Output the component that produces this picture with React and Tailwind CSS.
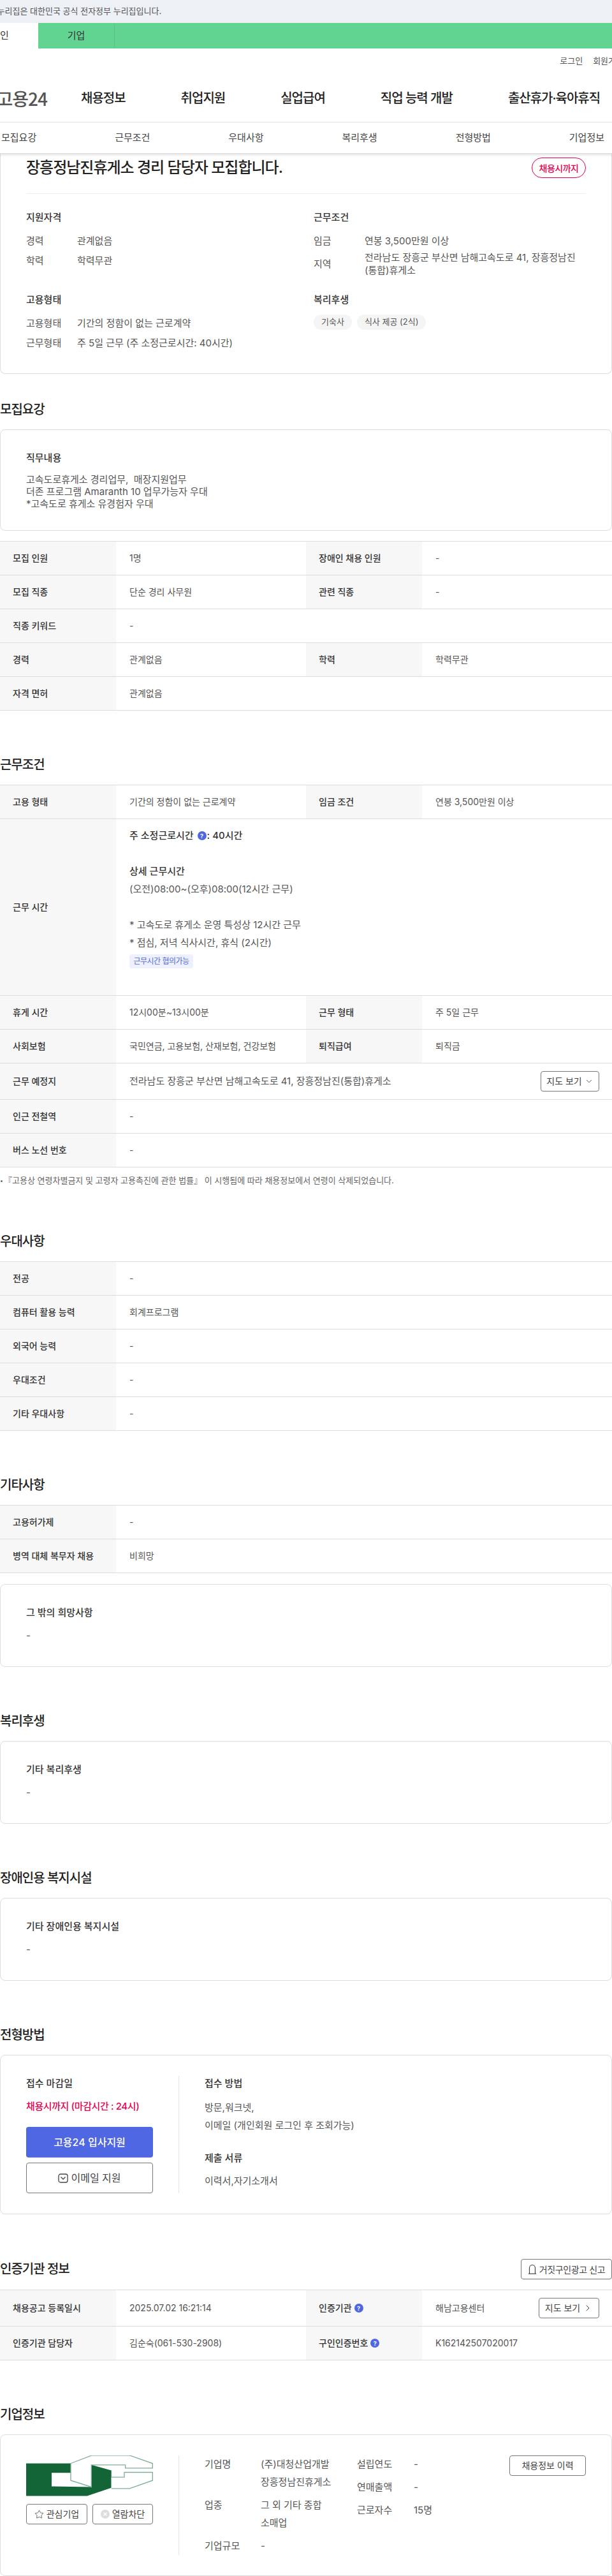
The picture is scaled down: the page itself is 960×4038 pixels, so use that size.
import { ChevronDown, ChevronRight, Star } from "lucide-react";

const TABS = ["모집요강", "근무조건", "우대사항", "복리후생", "전형방법", "기업정보"];
const NAV = ["채용정보", "취업지원", "실업급여", "직업 능력 개발", "출산휴가·육아휴직"];

export default function App() {
    return (
        <div className="relative w-[960px] overflow-hidden bg-white font-['Inter','Noto_Sans_CJK_KR',sans-serif] text-[#222]">
            <Header />

            <div className="rounded-b-lg border-x border-b border-[#ddd] px-10 pt-[6px] pb-[37px]">
                <div className="flex items-start justify-between border-b border-[#eee] pb-6">
                    <h1 className="text-[24px] leading-8 font-medium tracking-[-1px] text-[#222]">
                        장흥정남진휴게소 경리 담당자 모집합니다.
                    </h1>
                    <span className="flex h-8 w-[85px] items-center justify-center rounded-full border border-[#e6004d] text-[14px] font-medium tracking-[-0.5px] text-[#e6004d]">
                        채용시까지
                    </span>
                </div>
                <div className="mt-[25px] grid grid-cols-[451px_1fr] gap-y-6">
                    <div>
                        <SummaryTitle>지원자격</SummaryTitle>
                        <SummaryRow label="경력" value="관계없음" className="mt-[15px]" />
                        <SummaryRow label="학력" value="학력무관" className="mt-[11px]" />
                    </div>
                    <div>
                        <SummaryTitle>근무조건</SummaryTitle>
                        <SummaryRow label="임금" value="연봉 3,500만원 이상" className="mt-[15px]" />
                        <SummaryRow
                            label="지역"
                            value="전라남도 장흥군 부산면 남해고속도로 41, 장흥정남진(통합)휴게소"
                            className="mt-[6px] items-center"
                        />
                    </div>
                    <div>
                        <SummaryTitle>고용형태</SummaryTitle>
                        <SummaryRow label="고용형태" value="기간의 정함이 없는 근로계약" className="mt-[15px]" />
                        <SummaryRow label="근무형태" value="주 5일 근무 (주 소정근로시간: 40시간)" className="mt-[11px]" />
                    </div>
                    <div>
                        <SummaryTitle>복리후생</SummaryTitle>
                        <div className="mt-[11px] flex gap-2">
                            <Chip>기숙사</Chip>
                            <Chip>식사 제공 (2식)</Chip>
                        </div>
                    </div>
                </div>
            </div>

            <h2 className="mt-[41px] mb-4 text-[20px] leading-[30px] font-medium tracking-[-1px]">모집요강</h2>
            <NoteCard title="직무내용">
                <p className="text-[15px] leading-[19px] text-[#555]">
                    고속도로휴게소 경리업무,&nbsp; 매장지원업무
                    <br />
                    더존 프로그램 Amaranth 10 업무가능자 우대
                    <br />
                    *고속도로 휴게소 유경험자 우대
                </p>
            </NoteCard>
            <div className="mt-4 border-t border-[#ddd]">
                <Row label="모집 인원" value="1명" label2="장애인 채용 인원" value2="-" />
                <Row label="모집 직종" value="단순 경리 사무원" label2="관련 직종" value2="-" />
                <Row label="직종 키워드" value="-" />
                <Row label="경력" value="관계없음" label2="학력" value2="학력무관" />
                <Row label="자격 면허" value="관계없음" />
            </div>

            <SectionTitle>근무조건</SectionTitle>
            <div className="border-t border-[#ddd]">
                <Row label="고용 형태" value="기간의 정함이 없는 근로계약" label2="임금 조건" value2="연봉 3,500만원 이상" />
                <Row label="근무 시간" value={<WorkHours />} />
                <Row label="휴게 시간" value="12시00분~13시00분" label2="근무 형태" value2="주 5일 근무" />
                <Row label="사회보험" value="국민연금, 고용보험, 산재보험, 건강보험" label2="퇴직급여" value2="퇴직금" />
                <Row
                    label="근무 예정지"
                    value={
                        <div className="flex w-full items-center justify-between pr-5">
                            <span className="text-[15px]">전라남도 장흥군 부산면 남해고속도로 41, 장흥정남진(통합)휴게소</span>
                            <button className="my-3 flex h-8 w-[92px] items-center justify-center gap-1 rounded border border-[#777] text-sm text-[#444]">
                                지도 보기 <ChevronDown size={14} strokeWidth={1.5} />
                            </button>
                        </div>
                    }
                />
                <Row label="인근 전철역" value="-" />
                <Row label="버스 노선 번호" value="-" />
            </div>
            <p className="mt-[11px] flex h-5 items-center text-[13px] text-[#666]">
                <span className="mr-[2px] ml-[1px] h-[3px] w-[3px] rounded-full bg-[#666]" />
                『고용상 연령차별금지 및 고령자 고용촉진에 관한 법률』 이 시행됨에 따라 채용정보에서 연령이 삭제되었습니다.
            </p>

            <SectionTitle>우대사항</SectionTitle>
            <div className="border-t border-[#ddd]">
                <Row label="전공" value="-" />
                <Row label="컴퓨터 활용 능력" value="회계프로그램" />
                <Row label="외국어 능력" value="-" />
                <Row label="우대조건" value="-" />
                <Row label="기타 우대사항" value="-" />
            </div>

            <SectionTitle>기타사항</SectionTitle>
            <div className="border-t border-[#ddd]">
                <Row label="고용허가제" value="-" />
                <Row label="병역 대체 복무자 채용" value="비희망" />
            </div>
            <div className="mt-[17px]">
                <DashCard title="그 밖의 희망사항" />
            </div>

            <SectionTitle>복리후생</SectionTitle>
            <DashCard title="기타 복리후생" />

            <SectionTitle>장애인용 복지시설</SectionTitle>
            <DashCard title="기타 장애인용 복지시설" />

            <SectionTitle>전형방법</SectionTitle>
            <div className="flex h-[250px] rounded-lg border border-[#ddd] pt-8 pl-10">
                <div className="h-[184px] w-[240px] border-r border-[#e5e5e5] pr-10">
                    <h3 className="text-[15px] leading-6 font-medium text-[#333]">접수 마감일</h3>
                    <p className="mt-3 text-[15px] leading-6 font-medium tracking-[-0.4px] text-[#e6004d]">
                        채용시까지 (마감시간 : 24시)
                    </p>
                    <button className="mt-5 h-12 w-full rounded bg-[#4f67e3] text-base font-medium text-white">
                        고용24 입사지원
                    </button>
                    <button className="mt-2 flex h-12 w-full items-center justify-center gap-1 rounded border border-[#777] text-base text-[#444]">
                        <MailIcon /> 이메일 지원
                    </button>
                </div>
                <div className="pl-10">
                    <h3 className="text-[15px] leading-6 font-medium text-[#333]">접수 방법</h3>
                    <p className="mt-3 text-[15px] leading-[28px] text-[#555]">
                        방문,워크넷,
                        <br />
                        이메일 (개인회원 로그인 후 조회가능)
                    </p>
                    <h3 className="mt-[25px] text-[15px] leading-6 font-medium text-[#333]">제출 서류</h3>
                    <p className="mt-3 text-[15px] leading-6 text-[#555]">이력서,자기소개서</p>
                </div>
            </div>

            <div className="mt-[70px] mb-4 flex h-[32px] items-center justify-between">
                <h2 className="text-[20px] leading-[30px] font-medium tracking-[-1px]">인증기관 정보</h2>
                <button className="flex h-8 w-[143px] items-center justify-center gap-1 rounded border border-[#777] text-[14px] tracking-[-0.4px] text-[#444]">
                    <BellIcon /> 거짓구인광고 신고
                </button>
            </div>
            <div className="border-t border-[#ddd]">
                <Row
                    label="채용공고 등록일시"
                    value="2025.07.02 16:21:14"
                    label2={
                        <>
                            인증기관 <HelpDot />
                        </>
                    }
                    value2={
                        <div className="flex w-full items-center justify-between pr-5">
                            <span>해남고용센터</span>
                            <button className="my-3 flex h-8 w-[95px] items-center justify-center gap-1 rounded border border-[#777] text-sm text-[#444]">
                                지도 보기 <ChevronRight size={16} strokeWidth={1.5} />
                            </button>
                        </div>
                    }
                />
                <Row
                    label="인증기관 담당자"
                    value="김순숙(061-530-2908)"
                    label2={
                        <>
                            구인인증번호 <HelpDot />
                        </>
                    }
                    value2="K162142507020017"
                />
            </div>

            <SectionTitle>기업정보</SectionTitle>
            <div className="flex h-[222px] rounded-lg border border-[#ddd] pt-8 pl-10">
                <div className="h-[156px] w-[240px] border-r border-[#e5e5e5] pr-10">
                    <CompanyLogo />
                    <div className="mt-3 flex justify-between">
                        <button className="flex h-8 w-[96px] items-center justify-center gap-1 rounded border border-[#777] text-sm text-[#444]">
                            <Star size={15} strokeWidth={1.3} /> 관심기업
                        </button>
                        <button className="flex h-8 w-[95px] items-center justify-center gap-1 rounded border border-[#777] text-sm text-[#444]">
                            <BlockIcon /> 열람차단
                        </button>
                    </div>
                </div>
                <div className="grid h-fit w-[239px] grid-cols-[88px_1fr] pl-10 text-[15px] text-[#555]">
                    <span className="leading-[28px]">기업명</span>
                    <span className="leading-[28px]">
                        (주)대청산업개발
                        <br />
                        장흥정남진휴게소
                    </span>
                    <span className="mt-[8px] leading-[28px]">업종</span>
                    <span className="mt-[8px] leading-[28px]">
                        그 외 기타 종합
                        <br />
                        소매업
                    </span>
                    <span className="mt-[8px] leading-[28px]">기업규모</span>
                    <span className="mt-[8px] leading-[28px]">-</span>
                </div>
                <div className="ml-10 grid h-fit w-[239px] grid-cols-[89px_1fr] gap-y-2 text-[15px] leading-[28px] text-[#555]">
                    <span>설립연도</span>
                    <span>-</span>
                    <span>연매출액</span>
                    <span>-</span>
                    <span>근로자수</span>
                    <span>15명</span>
                </div>
                <button className="h-8 w-[120px] rounded border border-[#777] text-sm text-[#444]">채용정보 이력</button>
            </div>
        </div>
    );
}

function Header() {
    return (
        <header className="relative z-10">
            <div className="flex h-9 items-center bg-[#edf0f5] text-[13px] text-[#555]">
                <span className="-ml-5 whitespace-nowrap">이 누리집은 대한민국 공식 전자정부 누리집입니다.</span>
            </div>
            <div className="flex h-10 bg-[#62d492] text-[15px] text-[#333]">
                <div className="-ml-[60px] flex w-[120px] items-center justify-center bg-white">개인</div>
                <div className="flex w-[120px] items-center justify-center border-r border-[#58c486]">기업</div>
            </div>
            <div className="flex h-10 items-center justify-end gap-4 text-[13px] text-[#555]">
                <span>로그인</span>
                <span className="-mr-[18px] whitespace-nowrap">회원가입</span>
            </div>
            <div className="flex h-[76px] items-center border-b border-[#e5e5e5]">
                <div className="flex w-[74px] justify-end font-['Noto_Sans_CJK_KR',sans-serif] text-[28px] font-medium tracking-[-1px] whitespace-nowrap text-[#555]">
                    고용24
                </div>
                <nav className="ml-[53px] flex gap-[87px] text-[20px] font-medium tracking-[-1px] text-[#222]">
                    {NAV.map((item) => (
                        <a key={item} className="whitespace-nowrap">
                            {item}
                        </a>
                    ))}
                </nav>
            </div>
            <div className="flex h-[49px] items-center justify-between border-b border-[#ddd] bg-white pr-3 pl-[2px] text-[15px] text-[#444] shadow-[0_2px_4px_rgba(0,0,0,0.12)]">
                {TABS.map((tab) => (
                    <a key={tab}>{tab}</a>
                ))}
            </div>
        </header>
    );
}

function SectionTitle({ children }) {
    return <h2 className="mt-[70px] mb-4 text-[20px] leading-[30px] font-medium tracking-[-1px]">{children}</h2>;
}

function SummaryTitle({ children }) {
    return <h3 className="text-[15px] leading-6 font-medium text-[#333]">{children}</h3>;
}

function SummaryRow({ label, value, className = "" }) {
    return (
        <div className={`flex text-[15px] leading-5 text-[#555] ${className}`}>
            <span className="w-20 shrink-0">{label}</span>
            <span className="w-[342px]">{value}</span>
        </div>
    );
}

function Chip({ children }) {
    return <span className="flex h-6 items-center rounded-full bg-[#f5f5f5] px-3 text-[13px] text-[#555]">{children}</span>;
}

function NoteCard({ title, children }) {
    return (
        <div className="rounded-lg border border-[#ddd] px-10 pt-8 pb-8">
            <h3 className="mb-3 text-[15px] leading-6 font-medium text-[#333]">{title}</h3>
            {children}
        </div>
    );
}

function DashCard({ title }) {
    return (
        <div className="rounded-lg border border-[#ddd] px-10 pt-8 pb-9">
            <h3 className="mb-3 text-[15px] leading-6 font-medium text-[#333]">{title}</h3>
            <p className="text-[15px] leading-6 text-[#555]">-</p>
        </div>
    );
}

function Row({ label, value, label2, value2 }) {
    const cols = label2 ? "grid-cols-[182px_298px_182px_1fr]" : "grid-cols-[182px_1fr]";
    return (
        <div className={`grid min-h-[53px] border-b border-[#ddd] ${cols}`}>
            <div className="flex items-center gap-1 bg-[#f7f7f7] pl-5 text-sm font-medium text-[#333]">{label}</div>
            <div className="flex items-center pl-[21px] text-sm text-[#555]">{value}</div>
            {label2 && (
                <>
                    <div className="flex items-center gap-1 bg-[#f7f7f7] pl-5 text-sm font-medium text-[#333]">{label2}</div>
                    <div className="flex items-center pl-[21px] text-sm text-[#555]">{value2}</div>
                </>
            )}
        </div>
    );
}

function WorkHours() {
    return (
        <div className="pt-3 pb-[42px] text-[15px] leading-7">
            <p className="flex items-center font-medium text-[#333]">
                주 소정근로시간 <HelpDot className="mx-[6px]" />
                <span className="-ml-[5px]">: 40시간</span>
            </p>
            <p>&nbsp;</p>
            <p className="font-medium text-[#333]">상세 근무시간</p>
            <p>(오전)08:00~(오후)08:00(12시간 근무)</p>
            <p>&nbsp;</p>
            <p>* 고속도로 휴게소 운영 특성상 12시간 근무</p>
            <p>* 점심, 저녁 식사시간, 휴식 (2시간)</p>
            <span className="mt-1 flex h-[22px] w-[100px] items-center justify-center rounded bg-[#eef1fd] text-[12px] tracking-[-0.5px] text-[#4f67e3]">
                근무시간 협의가능
            </span>
        </div>
    );
}

function HelpDot({ className = "" }) {
    return (
        <span
            className={`inline-flex h-[14px] w-[14px] items-center justify-center rounded-full bg-[#4f67e3] text-[9px] font-bold leading-none text-white ${className}`}
        >
            ?
        </span>
    );
}

function MailIcon() {
    return (
        <svg width="16" height="16" viewBox="0 0 16 16" fill="none" stroke="#444" strokeWidth="1.3">
            <rect x="1" y="2" width="14" height="13" rx="3" />
            <path d="M4.5 6.5 8 10l3.5-3.5" />
        </svg>
    );
}

function BellIcon() {
    return (
        <svg width="14" height="18" viewBox="0 0 14 18" fill="none" stroke="#444" strokeWidth="1.2">
            <path d="M2.5 16V7a4.5 4.5 0 0 1 9 0v9" />
            <path d="M1 16.2h12" />
        </svg>
    );
}

function BlockIcon() {
    return (
        <svg width="14" height="14" viewBox="0 0 14 14">
            <circle cx="7" cy="7" r="7" fill="#ddd" />
            <path d="M4.5 4.5l5 5M9.5 4.5l-5 5" stroke="#fff" strokeWidth="1.3" />
        </svg>
    );
}

function CompanyLogo() {
    return (
        <svg width="199" height="64" viewBox="123 148 597 191">
            <path d="M123 185H333V229H243V293L430 296V192L524 218V300L410 338H123Z" fill="#136538" />
            <path d="M333 185L430 148H612L718 185V207H590V192H430V296L333 265Z" fill="#fff" stroke="#7fae94" strokeWidth="4" />
            <path d="M524 250H585V227H718V265L610 303H524" fill="#fff" stroke="#7fae94" strokeWidth="4" />
        </svg>
    );
}
